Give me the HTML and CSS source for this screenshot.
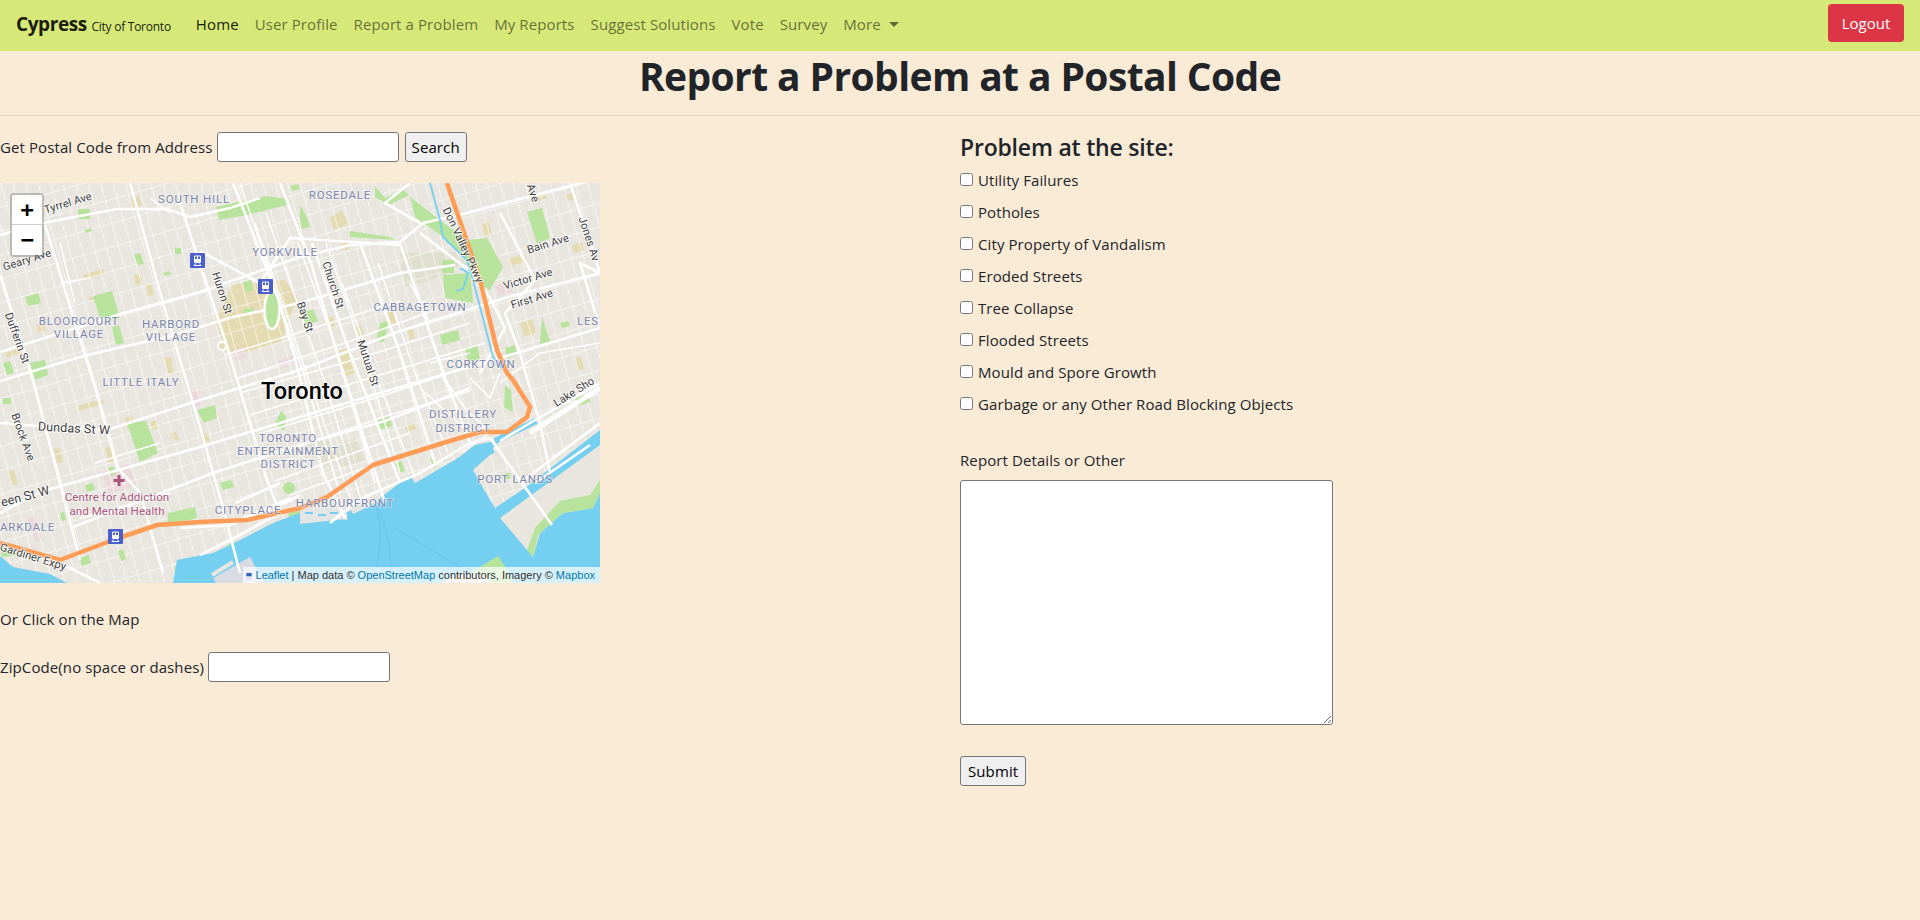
FILE: index.html
```html
<!DOCTYPE html>
<html lang="en">
<head>
<meta charset="utf-8">
<title>Report a Problem at a Postal Code</title>
<link rel="stylesheet" href="styles.css">
</head>
<body>
<nav class="navbar">
  <a class="brand" href="#">Cypress <small>City of Toronto</small></a>
  <ul class="nav-links">
    <li><a class="nav-link active" href="#">Home</a></li>
    <li><a class="nav-link" href="#">User Profile</a></li>
    <li><a class="nav-link" href="#">Report a Problem</a></li>
    <li><a class="nav-link" href="#">My Reports</a></li>
    <li><a class="nav-link" href="#">Suggest Solutions</a></li>
    <li><a class="nav-link" href="#">Vote</a></li>
    <li><a class="nav-link" href="#">Survey</a></li>
    <li><a class="nav-link caret" href="#">More</a></li>
  </ul>
  <button class="logout" type="button">Logout</button>
</nav>
<h1 class="title">Report a Problem at a Postal Code</h1>
<hr class="rule">
<main class="columns">
  <section class="left">
    <form class="inline-row">
      <label for="addr">Get Postal Code from Address</label>
      <input id="addr" class="field" type="text">
      <button class="plain-btn" type="button">Search</button>
    </form>
    <div class="map">
      <svg class="map-art" viewBox="0 0 600 400" width="600" height="400" xmlns="http://www.w3.org/2000/svg">
        <defs>
          <pattern id="ns" width="12" height="400" patternUnits="userSpaceOnUse" patternTransform="rotate(-16)">
            <rect width=".8" height="400" fill="#fff"/>
          </pattern>
          <pattern id="ew" width="400" height="23" patternUnits="userSpaceOnUse" patternTransform="rotate(-16)">
            <rect width="400" height=".8" fill="#fff"/>
          </pattern>
          <symbol id="subway" viewBox="0 0 15 15">
            <rect width="15" height="15" rx="1" fill="#4a5fcb"/>
            <rect x="4" y="2.500" width="7" height="7.500" rx="1" fill="#fff"/>
            <rect x="5" y="3.500" width="2" height="2.500" fill="#4a5fcb"/>
            <rect x="8" y="3.500" width="2" height="2.500" fill="#4a5fcb"/>
            <path d="M4 13l1.500-2.500M11 13l-1.500-2.500M4.500 12.500h6" stroke="#fff" stroke-width="1" fill="none"/>
          </symbol>
        </defs>
        <rect class="land" width="600" height="400"/>

        <path class="tan" d="M215 137L233 101L285 97L297 115L281 159L240 172L226 168Z"/>
        <g class="tan">
          <path d="M131 14l8-1l3 10l-9 2zM83 92l20-6l2 5l-20 6zM134 92l6-1l3 10l-7 1zM146 102l5-1l3 11l-6 1zM88 115l14-4l1 3l-14 4zM5 170l14-5l1 5l-14 5zM36 142l8-1l2 7l-8 1zM165 175l6-1l3 16l-6 1zM78 223l25-7l1 5l-25 7zM125 235l7-2l3 11l-7 2zM170 250l6-1l3 8l-6 1zM150 239l6-2l3 8l-6 2zM200 252l7-2l3 8l-7 2zM54 266l6-1l3 14l-6 1zM8 288l6-1l4 14l-6 1zM105 265l6-2l4 15l-6 2zM325 135l8-2l3 12l-8 2zM336 168l12-3l8 25l-10 3zM355 143l6-1l3 10l-6 1zM385 130l8-2l3 12l-8 2zM405 243l9-3l2 6l-9 3zM509 76l16-5l2 7l-16 5zM520 140l12-4l4 14l-12 4zM575 175l6-1l3 12l-6 2zM572 62l10-3l2 8l-10 3zM482 41l7-2l3 13l-7 2zM340 60l7-2l3 8l-7 2zM535 12l10-3l2 6l-10 3zM565 12l8-2l2 6l-8 2zM330 35l12-8l6 14l-14 6zM407 145l5-2l3 12l-5 2z"/>
        </g>
        <path class="mute" d="M400 70l55-1l12 12l-40 18l-22 4zM308 260l20-8l12 25l-20 8zM330 265l25-10l10 22l-22 8z"/>
        <g class="pink">
          <path d="M102 289l26-8l9 22l-28 8zM189 208l9-2l5 16l-9 2zM28 335l7-2l7 24l-7 2zM278 178l14-6l3 8l-14 6zM295 178l8-3l2 6l-8 3zM233 168l10-4l3 10l-10 4zM495 103l15-5l3 11l-15 4z"/>
        </g>
        <rect class="minor" width="600" height="400" fill="url(#ns)"/>
        <rect class="minor" width="600" height="400" fill="url(#ew)"/>
        <g class="park">
          <path d="M78 26h12v10h-12zM85 47l6-2l1 3l-6 2zM134 72l6-2l4 11l-6 1zM175 65h6v6h-6zM163 90l7-2l1 3l-7 2zM25 114l13-4l3 10l-13 3zM93 113l19-5l8 27l-19 3zM112 144l7-2l5 18l-8 2zM3 180l7-2l4 12l-7 2zM30 180l15-3l3 15l-13 5zM243 99l8-2l2 10l-7 2zM243 127l10-3l1 6l-10 3zM216 24l50-11l22 3l-1 6l-40 10l-28 5zM290 3l8-2l2 5l-8 2z"/>
          <path d="M375 3l10 12l18-8l6 5l-20 10l-14-8zM300 22l6 10l4 12l-8 2l-2-12zM350 48l40 6l6 3l-46-3zM410 14L440 37L467 57L487 55L503 84L490 107L477 100L463 74L443 54L415 34ZM527 29l15-4l8 30l-13 6zM442 77h12v13h-12zM443 92l27-2l3 30l-28-5zM300 130l13-4l5 12l-13 5zM380 140l9-3l-5 22l-8-1zM440 152l18-5l2 10l-18 5zM465 165l12-3l3 14l-12 3zM505 165l10-3l2 10l-10 3zM542 134l8 24l-10 3zM560 140l8-2l2 5l-8 2z"/>
          <path d="M127 240l19-2l12 32l-18 9zM197 227l18-5l2 13l-13 5zM168 330l27-6l2 11l-30 8zM220 300l11-3l3 7l-11 3zM85 302l8-2l2 7l-8 2zM108 285l5-2l3 8l-5 2zM275 240l6-12l5 5l-2 15zM377 236l12-4l3 11l-12 4zM283 305a6 6 0 1 0 12 0a6 6 0 1 0-12 0zM287 330l13-4l3 7l-13 3zM395 280l6-2l4 10l-6 2zM430 276l5-1l3 6l-5 2zM505 202l6 5l2 22l-9-5zM575 215l13-4l2 8l-13 4zM80 375l9-3l2 8l-9 3zM118 368l5-2l3 10l-5 2zM3 215h8v6h-8zM60 330l4-1l2 8l-4 1zM505 290h5v6h-5zM485 345l5-2l1 4l-5 2z"/>
          <path d="M200 378l6 4l-15 12l-14 2l-3-12zM230 360l10 8l-10 6l-8-6zM0 360l22 12l-20 2z"/>
        </g>

        <path class="water" d="M0 373L13 384L50 391L67 400H0Z"/>
        <path class="water" d="M173 400L177 377L213 370L240 357L273 340L300 330L347 337L348 329L373 317L380 315L410 292L415 300L458 275L475 262L495 258L492 270L473 287L483 305L495 325L525 305L600 247V400Z"/>
        <path class="land" d="M500 335L600 262V310L593 325L563 330L540 350L533 374Z"/>
        <path class="park" d="M533 374L538 352L563 330L593 325L600 310V297L590 312L560 318L535 345L527 367Z"/>
        <path class="park" d="M470 390L498 373L512 395L512 400H480Z"/>
        <path class="land" d="M440 400L455 392L482 390L490 400Z"/>
        <path class="airport" d="M213 395L250 374L263 398V400H216Z"/>
        <path class="pier" d="M212 392L233 379"/>
        <path class="channel" d="M495 258l41-20"/>
        <path class="slip" d="M482 273l12-5M460 285l-2-10M348 329l5 13M373 317l5 16M395 306l3 7"/>
        <path class="shiptrack" d="M373 315q16 45-3 85M378 325q16 35 12 75M395 345l70 42"/>
        <path class="dock" d="M300 325l47-2l-2 13l-45 5zM350 325l28-12l3 5l-28 13z"/>
        <path class="slip-small" d="M305 330h8M318 332h8M330 330h8"/>

        <g class="roads-mid">
          <path d="M240 0L300 180L340 310M255 40L310 200L352 320M266 30L325 200L362 320M298 60L338 170L375 300M326 60L362 165L400 290M342 100L375 190L415 295M378 80L415 190L448 270"/>
          <path d="M225 172L330 140L400 118M238 195L345 160L440 125M240 210L360 175L470 140M250 232L370 195L485 160M262 250L385 212L450 190M262 275L390 232L470 208M275 298L410 250M290 312L420 265M430 180L470 170M160 260L95 280M170 310L80 335"/>
          <path d="M420 205L470 250M440 190L465 225L490 250L460 270M470 195L490 215L500 190"/>
          <path d="M60 60L75 120M60 100L90 95M150 15L170 30M410 100L430 140M500 200L540 170L600 160"/>
        </g>
        <g class="roads">
          <path d="M0 169L117 132L200 109L300 74L350 62L400 59L423 40L467 30L600-5"/>
          <path d="M0 52L43 40L117 26L167 26L190 34L230 25L260 15"/>
          <path d="M0 198L87 172L167 154L233 134L300 120L400 90L455 82"/>
          <path d="M0 240L50 244L107 247L200 217L300 187L400 148L505 115L600 90"/>
          <path d="M0 330L40 309L200 264L300 234L380 210L500 175L600 145"/>
          <path d="M73 344L213 290L300 262L385 238L470 205"/>
          <path d="M0 92L33 197L80 377"/>
          <path d="M45 42L95 204L117 284L140 310L163 390"/>
          <path d="M130 0L163 120L193 220L220 314L240 390"/>
          <path d="M180 20L227 163L267 297L280 330"/>
          <path d="M233 0L278 115L295 175L323 290L345 335"/>
          <path d="M280 0L311 80L340 180L385 320"/>
          <path d="M312 60L350 170L400 300"/>
          <path d="M360 60L400 170L435 280"/>
          <path d="M400 60L445 195L470 260"/>
          <path d="M500 30L535 97L505 130L520 170L540 240L550 290"/>
          <path d="M570 0L600 90L580 80L600 145"/>
          <path d="M420 50L470 88L490 115L505 145L480 190"/>
          <path d="M200 68L260 100L290 55L400 62"/>
          <path d="M410 0L385 20L420 40"/>
          <path d="M500 258L530 240L600 200"/>
          <path d="M490 255L552 342"/>
          <path d="M330 340L360 316L420 290L470 260L490 255"/>
          <path d="M520 300L600 240"/>
          <path d="M200 372L240 352L270 335L300 325"/>
          <path d="M0 362L60 380L100 400"/>
          <path d="M230 340L285 320L300 312"/>
          <path d="M180 345L230 342L290 315"/>
          <path d="M235 320L280 300"/>
          <path d="M535 300L590 262"/>
        </g>
        <ellipse class="queens-park" cx="272" cy="127" rx="7.500" ry="19"/>
        <circle class="roundabout" cx="222" cy="163" r="4"/>
        <path class="lakeshore" d="M530 250L600 205"/>
        <path class="river" d="M430 0L440 37L443 54L467 77L473 97L493 174L513 197"/>
        <path class="river" d="M460 85l8 5l-5 16l-7 2"/>
        <path class="freeway" d="M0 360L60 377L113 357L157 342L200 339L247 337L300 325L327 314L373 282L443 260L480 249L507 249L527 234L530 224L513 197L507 190L497 167L480 97L447 0"/>

        <text class="hood" x="194" y="20">SOUTH HILL</text>
        <text class="hood" x="340" y="16">ROSEDALE</text>
        <text class="hood" x="285" y="73">YORKVILLE</text>
        <text class="hood" x="79" y="142">BLOORCOURT</text>
        <text class="hood" x="79" y="155">VILLAGE</text>
        <text class="hood" x="171" y="145">HARBORD</text>
        <text class="hood" x="171" y="158">VILLAGE</text>
        <text class="hood" x="141" y="203">LITTLE ITALY</text>
        <text class="hood" x="420" y="128">CABBAGETOWN</text>
        <text class="hood" x="481" y="185">CORKTOWN</text>
        <text class="hood" x="463" y="235">DISTILLERY</text>
        <text class="hood" x="463" y="249">DISTRICT</text>
        <text class="hood" x="288" y="259">TORONTO</text>
        <text class="hood" x="288" y="272">ENTERTAINMENT</text>
        <text class="hood" x="288" y="285">DISTRICT</text>
        <text class="hood" x="515" y="300">PORT LANDS</text>
        <text class="hood" x="248" y="331">CITYPLACE</text>
        <text class="hood" x="345" y="324">HARBOURFRONT</text>
        <text class="hood start" x="0" y="348">ARKDALE</text>
        <text class="hood start" x="577" y="142">LES</text>

        <text class="city" x="302" y="216">Toronto</text>
        <path class="hospital-cross" d="M119 292v11M113.500 297.500h11"/>
        <text class="poi" x="117" y="318">Centre for Addiction</text>
        <text class="poi" x="117" y="332">and Mental Health</text>

        <text class="street" transform="translate(68 20) rotate(-17)">Tyrrel Ave</text>
        <text class="street" transform="translate(27 77) rotate(-17)">Geary Ave</text>
        <text class="street" transform="translate(17 155) rotate(70)">Dufferin St</text>
        <text class="street" transform="translate(222 110) rotate(72)">Huron St</text>
        <text class="street" transform="translate(305 134) rotate(72)">Bay St</text>
        <text class="street" transform="translate(333 102) rotate(72)">Church St</text>
        <text class="street" transform="translate(368 180) rotate(72)">Mutual St</text>
        <text class="street" transform="translate(463 62) rotate(65)">Don Valley Pkwy</text>
        <text class="street" transform="translate(589 56) rotate(72)">Jones Av</text>
        <text class="street" transform="translate(533 10) rotate(72)">Ave</text>
        <text class="street" transform="translate(548 61) rotate(-17)">Bain Ave</text>
        <text class="street" transform="translate(528 96) rotate(-17)">Victor Ave</text>
        <text class="street" transform="translate(532 116) rotate(-17)">First Ave</text>
        <text class="street" transform="translate(574 209) rotate(-32)">Lake Sho</text>
        <text class="street major" transform="translate(74 245) rotate(3)">Dundas St W</text>
        <text class="street" transform="translate(23 254) rotate(70)">Brock Ave</text>
        <text class="street major" transform="translate(25 313) rotate(-15)">een St W</text>
        <text class="street" transform="translate(33 374) rotate(17)">Gardiner Expy</text>

        <use href="#subway" x="190" y="70" width="15" height="15"/>
        <use href="#subway" x="258" y="96" width="15" height="15"/>
        <use href="#subway" x="108" y="346" width="15" height="15"/>
      </svg>
      <div class="zoom-control">
        <a class="zoom-btn zoom-in" href="#">+</a>
        <a class="zoom-btn" href="#">&#8722;</a>
      </div>
      <div class="attribution">
        <svg class="flag" viewBox="0 0 6 8" width="6" height="7" xmlns="http://www.w3.org/2000/svg"><rect width="6" height="4" fill="#2f5fc4"/><rect y="4" width="6" height="4" fill="#dfe3f2"/></svg>
        <a href="#">Leaflet</a> | Map data © <a href="#">OpenStreetMap</a> contributors, Imagery © <a href="#">Mapbox</a>
      </div>
    </div>
    <p class="hint">Or Click on the Map</p>
    <div class="inline-row">
      <label for="zip">ZipCode(no space or dashes)</label>
      <input id="zip" class="field" type="text">
    </div>
  </section>
  <section class="right">
    <h4 class="subhead">Problem at the site:</h4>
    <label class="check"><input type="checkbox"> Utility Failures</label>
    <label class="check"><input type="checkbox"> Potholes</label>
    <label class="check"><input type="checkbox"> City Property of Vandalism</label>
    <label class="check"><input type="checkbox"> Eroded Streets</label>
    <label class="check"><input type="checkbox"> Tree Collapse</label>
    <label class="check"><input type="checkbox"> Flooded Streets</label>
    <label class="check"><input type="checkbox"> Mould and Spore Growth</label>
    <label class="check"><input type="checkbox"> Garbage or any Other Road Blocking Objects</label>
    <label class="details-label" for="details">Report Details or Other</label>
    <textarea id="details" class="details"></textarea>
    <button class="plain-btn submit" type="button">Submit</button>
  </section>
</main>
</body>
</html>
```

FILE: styles.css
```css
* { box-sizing: border-box; }
html, body { margin: 0; padding: 0; }
body {
  height: 920px;
  overflow: hidden;
  background: #faebd7;
  color: #212529;
  font-family: "Open Sans", "Noto Sans", sans-serif;
  font-size: 15px;
  line-height: 24px;
  letter-spacing: 0.1px;
}
a { text-decoration: none; }

.navbar {
  height: 51px;
  background: #d5e878;
  display: flex;
  align-items: flex-start;
  padding: 0 16px;
}
.brand {
  color: rgba(0,0,0,.9);
  font-size: 19px;
  line-height: 30px;
  margin-top: 9px;
  font-weight: 700;
  letter-spacing: -0.4px;
  margin-right: 17px;
  white-space: nowrap;
}
.brand small { font-size: 12px; font-weight: 400; letter-spacing: -0.25px; }
.nav-links {
  display: flex;
  list-style: none;
  margin: 0;
  padding: 0;
  flex: 1;
}
.nav-link {
  display: block;
  padding: 12px 8px 15px;
  color: rgba(0,0,0,.55);
  white-space: nowrap;
}
.nav-link.active { color: rgba(0,0,0,.9); }
.caret::after {
  content: "";
  display: inline-block;
  margin-left: 8px;
  vertical-align: 3px;
  border-top: 5px solid;
  border-left: 5px solid transparent;
  border-right: 5px solid transparent;
}
.logout {
  width: 76px;
  height: 38px;
  margin-top: 4px;
  background: #dc3545;
  color: #fff;
  border: 0;
  border-radius: 4px;
  font: inherit;
  padding: 0;
}

.title {
  margin: 1px 0 15px;
  text-align: center;
  font-size: 39px;
  line-height: 48px;
  font-weight: 700;
  letter-spacing: -0.6px;
}
.rule {
  margin: 0 0 16px;
  border: 0;
  border-top: 1px solid rgba(0,0,0,.1);
}
.columns {
  display: grid;
  grid-template-columns: 960px 960px;
}

.inline-row {
  display: flex;
  align-items: center;
  gap: 4px;
  height: 30px;
}
.field {
  width: 182px;
  height: 30px;
  background: #fff;
  border: 1px solid #767676;
  border-radius: 3px;
  padding: 1px 2px;
}
.plain-btn {
  height: 30px;
  background: #efefef;
  color: #000;
  border: 1px solid #767676;
  border-radius: 3px;
  font: inherit;
  letter-spacing: inherit;
  padding: 0 6px;
  margin-left: 2px;
}

.map {
  position: relative;
  width: 600px;
  height: 400px;
  margin-top: 21px;
  overflow: hidden;
}
.map-art { display: block; }
.land { fill: #e9e6df; }
.minor { opacity: .7; }
.tan { fill: #e4dbb3; }
.mute { fill: #dfe0cf; }
.pink { fill: #ecd9dc; }
.park { fill: #b7e39c; }
.water { fill: #75cff0; }
.airport { fill: #d8dae4; }
.dock { fill: #e3e6e4; }
.roads { fill: none; stroke: #fff; stroke-width: 2.600; stroke-linejoin: round; }
.roads-mid { fill: none; stroke: #fff; stroke-width: 1.500; }
.lakeshore { fill: none; stroke: #fff; stroke-width: 5; }
.queens-park { fill: #b7e39c; stroke: #fff; stroke-width: 2.500; }
.roundabout { fill: #e4dbb3; stroke: #fff; stroke-width: 2; }
.river { fill: none; stroke: #75cff0; stroke-width: 1.800; }
.channel { fill: none; stroke: #75cff0; stroke-width: 6; }
.slip { fill: none; stroke: #75cff0; stroke-width: 4; }
.slip-small { fill: none; stroke: #75cff0; stroke-width: 2; }
.pier { fill: none; stroke: #e9e6df; stroke-width: 4; }
.shiptrack { fill: none; stroke: #64bde6; stroke-width: .7; }
.freeway { fill: none; stroke: #ff9d57; stroke-width: 4.500; stroke-linejoin: round; }
.hood {
  font-family: Roboto, "Liberation Sans", sans-serif;
  font-size: 11.500px;
  letter-spacing: .8px;
  fill: #7a84ab;
  text-anchor: middle;
  paint-order: stroke;
  stroke: rgba(255,255,255,.55);
  stroke-width: 1.500px;
}
.hood.start { text-anchor: start; }
.city {
  font-family: Roboto, "Liberation Sans", sans-serif;
  font-size: 23.500px;
  font-weight: 500;
  fill: #000;
  text-anchor: middle;
  paint-order: stroke;
  stroke: rgba(255,255,255,.7);
  stroke-width: 2px;
}
.poi {
  font-family: Roboto, "Liberation Sans", sans-serif;
  font-size: 11.500px;
  fill: #a8557a;
  text-anchor: middle;
  letter-spacing: .1px;
  paint-order: stroke;
  stroke: rgba(255,255,255,.6);
  stroke-width: 1.500px;
}
.hospital-cross { fill: none; stroke: #a8557a; stroke-width: 3; }
.street {
  font-family: Roboto, "Liberation Sans", sans-serif;
  font-size: 11px;
  fill: #3f3f3f;
  text-anchor: middle;
  dominant-baseline: central;
  paint-order: stroke;
  stroke: rgba(255,255,255,.75);
  stroke-width: 2px;
}
.street.major { font-size: 12.500px; }

.zoom-control {
  position: absolute;
  top: 10px;
  left: 10px;
  border: 2px solid rgba(0,0,0,.2);
  border-radius: 4px;
}
.zoom-btn {
  display: block;
  width: 30px;
  height: 30px;
  background: #fff;
  color: #000;
  text-align: center;
  font: 700 22px/30px "DejaVu Sans Mono", "Liberation Mono", monospace;
  letter-spacing: 0;
}
.zoom-in { border-bottom: 1px solid #ccc; border-radius: 2px 2px 0 0; }
.attribution {
  position: absolute;
  right: 0;
  bottom: 0;
  height: 16px;
  padding: 0 5px 0 3px;
  background: rgba(255,255,255,.7);
  color: #333;
  font: 11px/16px "Liberation Sans", Arial, sans-serif;
  letter-spacing: 0;
  white-space: nowrap;
}
.attribution a { color: #0078a8; }
.flag { vertical-align: -0.500px; }

.hint { margin: 24px 0 21px; }

.right { display: flex; flex-direction: column; align-items: flex-start; }
.subhead {
  margin: 1px 0 6px;
  font-size: 23px;
  line-height: 29px;
  font-weight: 600;
  letter-spacing: -0.2px;
}
.check {
  display: block;
  height: 24px;
  margin-bottom: 8px;
  white-space: nowrap;
}
.check input {
  width: 13px;
  height: 13px;
  margin: 0 1px 0 0;
  vertical-align: 0;
}
.details-label { margin-top: 24px; margin-bottom: 8px; display: block; }
.details {
  display: block;
  width: 373px;
  height: 245px;
  background: #fff;
  border: 1px solid #767676;
  border-radius: 3px;
}
.submit { margin: 31px 0 0; padding: 0 7px; }
```
